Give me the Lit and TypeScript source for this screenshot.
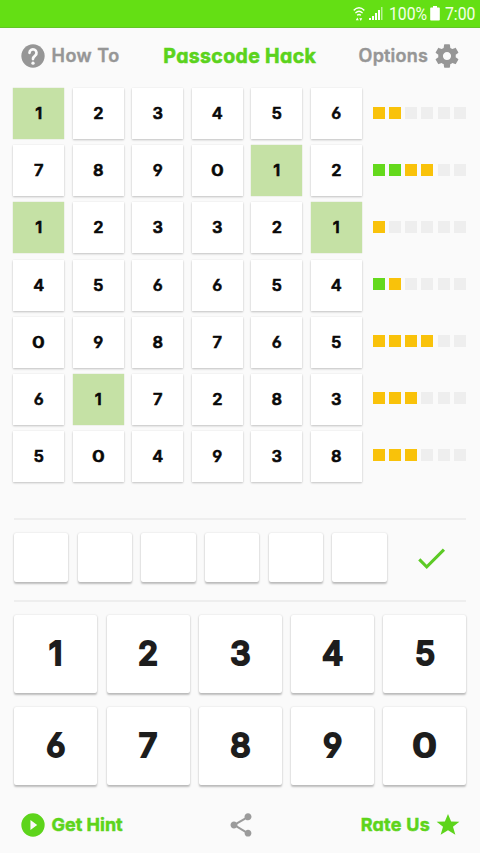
import { LitElement, html, css, svg } from "lit";
import { customElement } from "lit/decorators.js";
import { classMap } from "lit/directives/class-map.js";

interface Guess {
  digits: string;
  exact: number;
  near: number;
}

const GUESSES: Guess[] = [
  { digits: "123456", exact: 0, near: 2 },
  { digits: "789012", exact: 2, near: 2 },
  { digits: "123321", exact: 0, near: 1 },
  { digits: "456654", exact: 1, near: 1 },
  { digits: "098765", exact: 0, near: 4 },
  { digits: "617283", exact: 0, near: 3 },
  { digits: "504938", exact: 0, near: 3 },
];

const MARKED = new Set(["0-0", "1-4", "2-0", "2-5", "5-1"]);
const SLOTS = [0, 1, 2, 3, 4, 5];

const HELP = "M12 2C6.48 2 2 6.48 2 12s4.48 10 10 10 10-4.48 10-10S17.52 2 12 2z";
const HELP_MARK = "M9 9.3a3 3 0 1 1 4.9 2.3C12.7 12.5 12 13 12 14.6";
const GEAR = "M19.43 12.98c.04-.32.07-.64.07-.98s-.03-.66-.07-.98l2.11-1.65c.19-.15.24-.42.12-.64l-2-3.46c-.12-.22-.39-.3-.61-.22l-2.49 1c-.52-.4-1.08-.73-1.69-.98l-.38-2.65C14.46 2.18 14.25 2 14 2h-4c-.25 0-.46.18-.49.42l-.38 2.65c-.61.25-1.17.59-1.69.98l-2.49-1c-.23-.09-.49 0-.61.22l-2 3.46c-.13.22-.07.49.12.64l2.11 1.65c-.04.32-.07.65-.07.98s.03.66.07.98l-2.11 1.65c-.19.15-.24.42-.12.64l2 3.46c.12.22.39.3.61.22l2.49-1c.52.4 1.08.73 1.69.98l.38 2.65c.03.24.24.42.49.42h4c.25 0 .46-.18.49-.42l.38-2.65c.61-.25 1.17-.59 1.69-.98l2.49 1c.23.09.49 0 .61-.22l2-3.46c.12-.22.07-.49-.12-.64l-2.11-1.65zM12 15.5c-1.93 0-3.5-1.57-3.5-3.5s1.57-3.5 3.5-3.5 3.5 1.57 3.5 3.5-1.57 3.5-3.5 3.5z";
const PLAY = "M12 2a10 10 0 1 0 0 20 10 10 0 0 0 0-20zM9.8 16.2V7.8L15.6 12z";
const SHARE = "M18 16.08c-.76 0-1.44.3-1.96.77L8.91 12.7c.05-.23.09-.46.09-.7s-.04-.47-.09-.7l7.05-4.11c.54.5 1.25.81 2.04.81 1.66 0 3-1.34 3-3s-1.34-3-3-3-3 1.34-3 3c0 .24.04.47.09.7L8.04 9.81C7.5 9.31 6.79 9 6 9c-1.66 0-3 1.34-3 3s1.34 3 3 3c.79 0 1.5-.31 2.04-.81l7.12 4.16c-.05.21-.08.43-.08.65 0 1.61 1.31 2.92 2.92 2.92s2.92-1.31 2.92-2.92-1.31-2.92-2.92-2.92z";
const STAR = "M12 1.8l2.9 7 7.6.2-5.9 4.7 2.2 7.4-6.8-4.2-6.8 4.2 2.2-7.4-5.9-4.7 7.6-.2z";
const CHECK = "M9 16.17L4.83 12l-1.42 1.41L9 19 21 7l-1.41-1.41z";

const icon = (d: string, size: number) => html`
  <svg width=${size} height=${size} viewBox="0 0 24 24" fill="currentColor">${svg`<path d=${d} />`}</svg>
`;

const helpIcon = html`
  <svg width="28" height="28" viewBox="0 0 24 24" fill="currentColor">
    <path d=${HELP} />
    <path d=${HELP_MARK} fill="none" stroke="#fafafa" stroke-width="2.3" stroke-linecap="round" />
    <circle cx="12" cy="18.2" r="1.4" fill="#fafafa" />
  </svg>
`;

const digit = (d: string) => html`<span class=${classMap({ digit: true, zero: d === "0" })}>${d}</span>`;

@customElement("app-root")
export class AppRoot extends LitElement {
  static styles = css`
    :host {
      display: flex;
      flex-direction: column;
      width: 480px;
      height: 853px;
      overflow: hidden;
      background: #fafafa;
      font-family: Inter, sans-serif;
      font-feature-settings: "cv11", "cv03", "cv04";
    }
    * { box-sizing: border-box; }
    svg { display: block; flex: none; }

    .status {
      height: 28px;
      flex: none;
      display: flex;
      align-items: center;
      justify-content: flex-end;
      padding-right: 5px;
      background: #64df14;
      border-bottom: 1px solid #62c526;
      color: #f4ffe9;
      font: 400 17.5px/28px Roboto, sans-serif;
    }
    .status svg { color: #fff; }
    .wifi { margin-right: 4px; }
    .signal { margin-right: 6px; }
    .percent { width: 37px; margin-right: 4px; padding-top: 1px; }
    .clock { width: 30px; margin-left: 5px; padding-top: 1px; }
    .narrow { display: inline-block; transform: scaleX(0.9); transform-origin: 0 50%; white-space: nowrap; }

    .bar {
      display: grid;
      grid-template-columns: 1fr auto 1fr;
      align-items: center;
      flex: none;
      height: 56px;
      padding: 0 19px 0 18.5px;
      color: #969696;
      font-weight: 600;
      font-size: 18px;
      line-height: 24px;
      white-space: nowrap;
    }
    .action { display: flex; align-items: center; gap: 5px; -webkit-text-stroke: 0.4px currentColor; }
    .action.end { justify-content: flex-end; }
    .help { letter-spacing: 0.5px; }
    .options { letter-spacing: 0.2px; }
    .title {
      color: #5bd31c;
      font-weight: 700;
      font-size: 19.5px;
      letter-spacing: 0.35px;
      -webkit-text-stroke: 0.6px currentColor;
    }

    .board {
      display: grid;
      row-gap: 6.1px;
      padding: 4.3px 13.5px 0 13.3px;
      flex: none;
    }
    .guess { display: flex; align-items: center; height: 51px; }
    .cells { display: grid; grid-template-columns: repeat(6, 51px); column-gap: 8.5px; }
    .cell {
      height: 51px;
      display: grid;
      place-items: center;
      background: #fff;
      box-shadow: 0 1px 2px rgba(0, 0, 0, 0.22), 0 0 1px rgba(0, 0, 0, 0.08);
      color: #080808;
      font-weight: 600;
      font-size: 16.5px;
      line-height: 20px;
      -webkit-text-stroke: 0.6px currentColor;
      padding-bottom: 1px;
    }
    .cell.marked { background: #c5e1a5; box-shadow: 0 0 1px rgba(130, 170, 90, 0.5); }
    .digit { display: block; }
    .zero { transform: scaleX(1.17); }
    .pips {
      display: grid;
      grid-template-columns: repeat(6, 12px);
      column-gap: 4.3px;
      margin-left: 10.8px;
      padding-bottom: 2.4px;
    }
    .pip { height: 12px; background: #eee; }
    .pip.exact { background: #64d91c; }
    .pip.near { background: #f9c20a; }

    .entry {
      display: flex;
      align-items: center;
      margin: 36.2px 14px 0;
      height: 84px;
      flex: none;
      border-top: 2px solid #eeeeee;
      border-bottom: 2px solid #eeeeee;
      padding-bottom: 4.5px;
    }
    .slots { display: grid; grid-template-columns: repeat(6, 54.3px); column-gap: 9.4px; }
    .slot, .key { background: #fff; border-radius: 2px; box-shadow: 0 1.5px 2px rgba(0, 0, 0, 0.24), 0 0 2px rgba(0, 0, 0, 0.1); }
    .slot { height: 49px; }
    .submit { color: #5cca25; margin-left: 26px; padding-top: 1px; }

    .keypad {
      display: grid;
      grid-template-columns: repeat(5, 83px);
      grid-auto-rows: 77.5px;
      gap: 14.5px 9.3px;
      padding: 13px 14px 0 14.3px;
      flex: none;
    }
    .key {
      display: grid;
      place-items: center;
      color: #1d1d1d;
      font-weight: 500;
      font-size: 32.5px;
      line-height: 40px;
      -webkit-text-stroke: 2.2px currentColor;
    }
    .footer {
      margin-top: 12px;
      color: #5dd41b;
      font-weight: 700;
    }
    .footer .action { -webkit-text-stroke: 0.5px currentColor; }
    .hint { letter-spacing: 0; }
    .rate { letter-spacing: 0.25px; }
    .share { color: #9b9b9b; padding-left: 2px; }
  `;

  private renderGuess(guess: Guess, row: number) {
    return html`
      <div class="guess">
        <div class="cells">
          ${[...guess.digits].map(
            (d, col) => html`<div class=${classMap({ cell: true, marked: MARKED.has(`${row}-${col}`) })}>${digit(d)}</div>`
          )}
        </div>
        <div class="pips">
          ${SLOTS.map(
            (i) => html`<span class=${classMap({
              pip: true,
              exact: i < guess.exact,
              near: i >= guess.exact && i < guess.exact + guess.near,
            })}></span>`
          )}
        </div>
      </div>
    `;
  }

  render() {
    return html`
      <div class="status">
        <svg class="wifi" width="12" height="16" viewBox="0 0 14 16" preserveAspectRatio="none" fill="none" stroke="currentColor" stroke-width="1.4">
          <path d="M.8 4.4Q7-.8 13.2 4.4M2.8 7Q7 3.6 11.2 7M4.7 9.3Q7 7.7 9.3 9.3" />
          <path d="M3.3 14.2l1.7-2.8 1.7 2.8zM7.4 12.2l1.7 2.8 1.7-2.8z" fill="currentColor" stroke="none" />
        </svg>
        <svg class="signal" width="14" height="14" viewBox="0 0 14 14" fill="currentColor">
          <path d="M0 11h2v2H0zM3 9h2v4H3zM6 6h2v7H6zM9 3h2v10H9z" />
          <path d="M12 0h1.5v13H12z" opacity=".55" />
        </svg>
        <div class="percent"><span class="narrow">100%</span></div>
        <svg width="10" height="15" viewBox="0 0 10 15" fill="currentColor"><path d="M3 0h4v1.5h2a.8.8 0 0 1 .8.8v11.4a.8.8 0 0 1-.8.8H1a.8.8 0 0 1-.8-.8V2.3A.8.8 0 0 1 1 1.5h2z" /></svg>
        <div class="clock"><span class="narrow">7:00</span></div>
      </div>

      <div class="bar">
        <div class="action help">${helpIcon}<span>How To</span></div>
        <div class="title">Passcode Hack</div>
        <div class="action end options"><span>Options</span>${icon(GEAR, 28)}</div>
      </div>

      <div class="board">${GUESSES.map((g, row) => this.renderGuess(g, row))}</div>

      <div class="entry">
        <div class="slots">${SLOTS.map(() => html`<div class="slot"></div>`)}</div>
        <div class="submit">${icon(CHECK, 36.6)}</div>
      </div>

      <div class="keypad">${[..."1234567890"].map((d) => html`<div class="key">${digit(d)}</div>`)}</div>

      <div class="bar footer">
        <div class="action hint">${icon(PLAY, 28)}<span>Get Hint</span></div>
        <div class="share">${icon(SHARE, 28)}</div>
        <div class="action end rate"><span>Rate Us</span>${icon(STAR, 26)}</div>
      </div>
    `;
  }
}
